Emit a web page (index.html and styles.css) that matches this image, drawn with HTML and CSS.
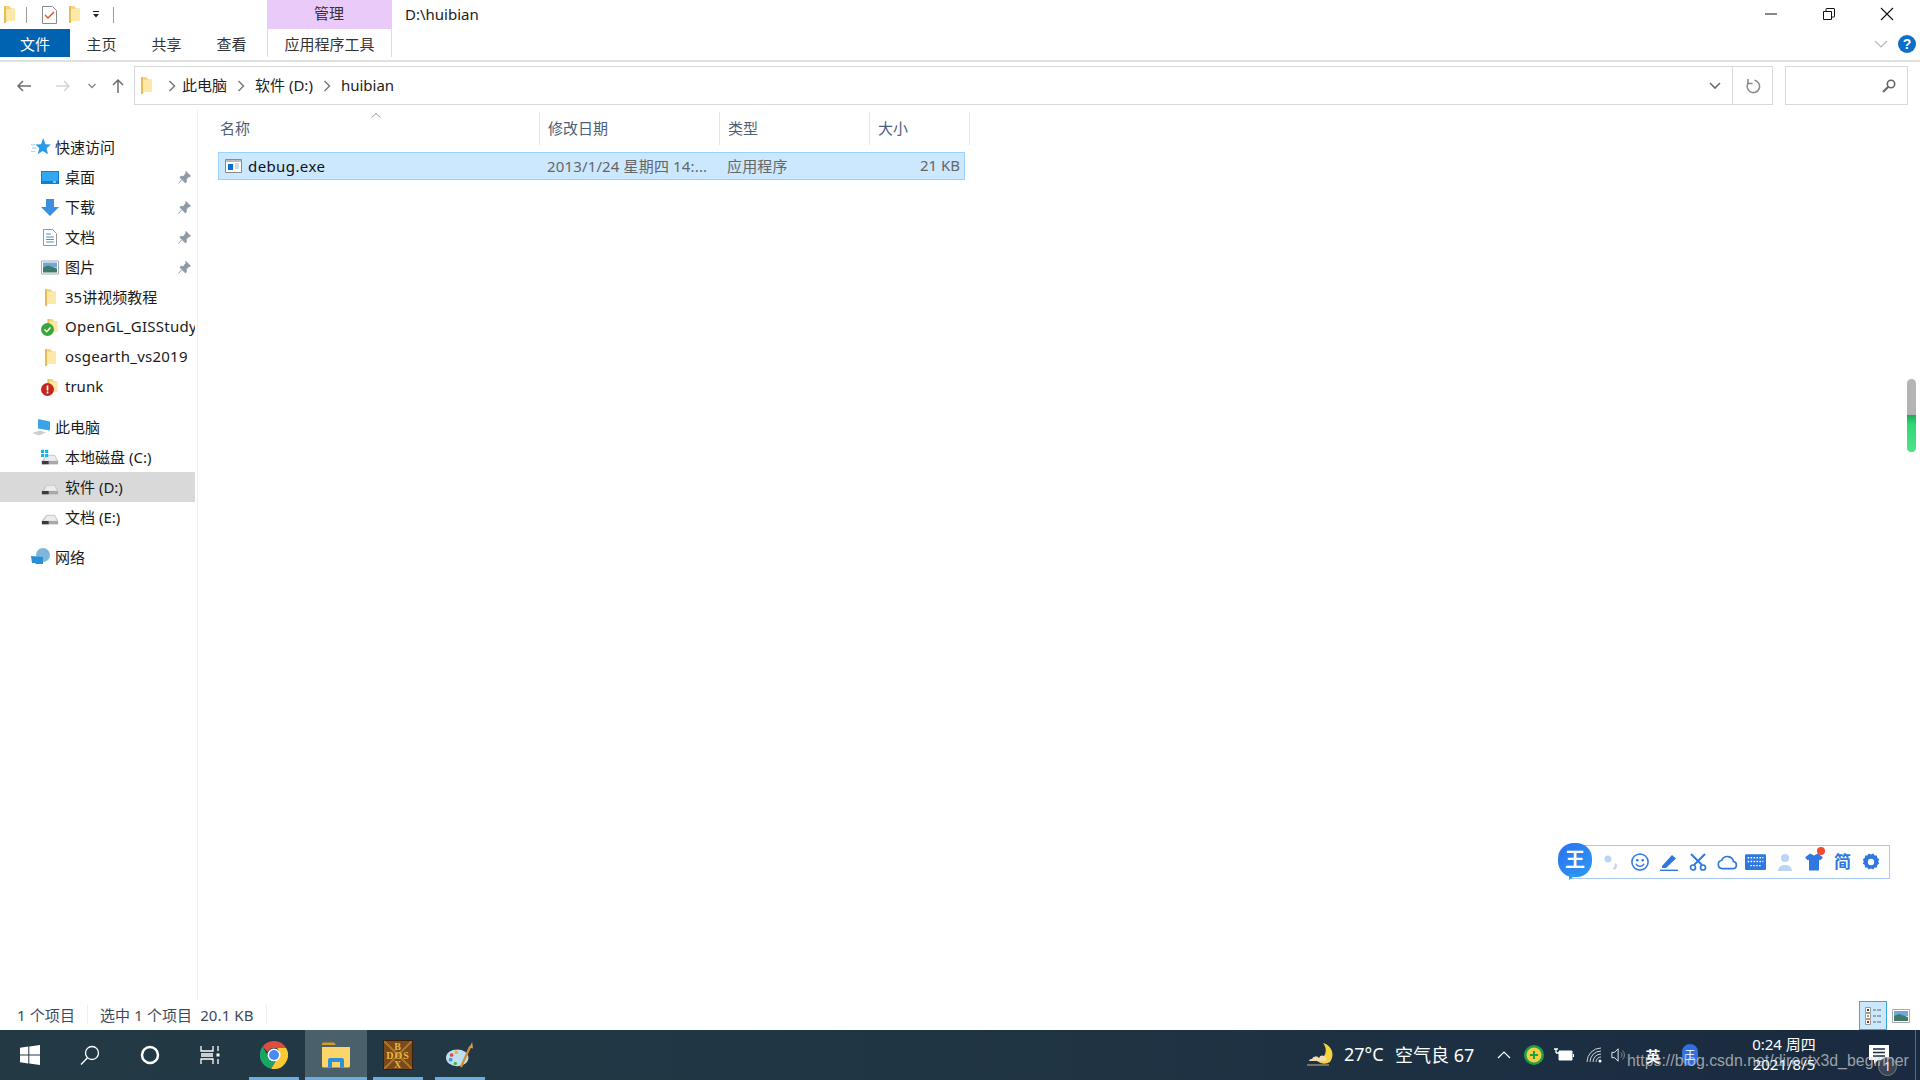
FILE: index.html
```html
<!DOCTYPE html>
<html lang="zh-CN">
<head>
<meta charset="utf-8">
<title>D:\huibian</title>
<link rel="stylesheet" href="styles.css">
</head>
<body>
<svg class="defs" width="0" height="0">
  <symbol id="folder" viewBox="0 0 12 17">
    <path d="M1 0h5.500l2 2.500H12V14.500H5.500L1 17z" fill="#f5d77f"/>
    <path d="M1 0h2v17H1z" fill="#e6bd56"/>
    <path d="M3 3h9v11.500H3z" fill="#fce9a8"/>
  </symbol>
  <symbol id="pin" viewBox="0 0 14 14">
    <path d="M8.500 0.500l5 5-2 .8-2.700 2.700.2 2.800-1 1-6-6 1-1 2.800.2L8.500 2.500z M4 9.500L.5 13.500" fill="#8e99a6" stroke="#8e99a6"/>
  </symbol>
  <symbol id="drive" viewBox="0 0 20 12">
    <path d="M1 7L6 .5h9.500L19 7v4H1z" fill="#c9c9c9"/>
    <path d="M6.500 1.500h8.500L17.500 7h-14z" fill="#ececec"/>
    <path d="M1 7.500h18v3.500H1z" fill="#a8a8a8"/>
    <path d="M1 7.500h7.500v3.500H1z" fill="#3c3c3c"/>
  </symbol>
  <symbol id="sep" viewBox="0 0 8 12">
    <path d="M1.500 1L6.500 6 1.500 11" fill="none" stroke="#7b7b7b" stroke-width="1.500"/>
  </symbol>
</svg>

<header class="titlebar">
  <div class="qat">
    <svg class="ic12" viewBox="0 0 12 17"><use href="#folder"/></svg>
    <span class="qat-sep"></span>
    <svg class="qat-check" viewBox="0 0 15 18"><path d="M.5.500h10l4 4v13H.500z" fill="#fff" stroke="#8a8a8a"/><path d="M3 9l3 3 6-6" fill="none" stroke="#e8542a" stroke-width="1.500"/></svg>
    <svg class="ic12 qat-f2" viewBox="0 0 12 17"><use href="#folder"/></svg>
    <svg class="qat-down" viewBox="0 0 8 7"><path d="M1 .500h6" stroke="#222"/><path d="M1 3h6L4 6.500z" fill="#222"/></svg>
    <span class="qat-sep qat-sep2"></span>
  </div>
  <div class="manage">管理</div>
  <div class="wintitle">D:\huibian</div>
  <div class="winbtns">
    <svg class="winbtn" viewBox="0 0 14 14"><path d="M1 7h12" stroke="#111"/></svg>
    <svg class="winbtn" viewBox="0 0 14 14"><path d="M1.500 4.500h8v8h-8z M4 4.500V2a.5.5 0 0 1 .5-.5h7.500a.5.5 0 0 1 .5.500V9.500a.5.5 0 0 1-.5.500H9.500" fill="none" stroke="#111"/></svg>
    <svg class="winbtn" viewBox="0 0 14 14"><path d="M1 1l12 12M13 1L1 13" stroke="#111" stroke-width="1.100"/></svg>
  </div>
</header>

<nav class="ribbon">
  <div class="rtab rtab-file">文件</div>
  <div class="rtab">主页</div>
  <div class="rtab">共享</div>
  <div class="rtab">查看</div>
  <div class="rtab-tool">应用程序工具</div>
  <div class="ribbon-right">
    <svg class="rib-chev" viewBox="0 0 14 8"><path d="M1 1l6 6 6-6" fill="none" stroke="#b5b5b5" stroke-width="1.200"/></svg>
    <svg class="help" viewBox="0 0 18 18"><circle cx="9" cy="9" r="9" fill="#0a6fc9"/><text x="9" y="14" class="help-q">?</text></svg>
  </div>
</nav>

<section class="addrrow">
  <div class="navbtns">
    <svg class="nav-back" viewBox="0 0 16 12"><path d="M15 6H2M7 1L2 6l5 5" fill="none" stroke="#6d6d6d" stroke-width="1.500"/></svg>
    <svg class="nav-fwd" viewBox="0 0 16 12"><path d="M1 6h13M9 1l5 5-5 5" fill="none" stroke="#d6d6d6" stroke-width="1.500"/></svg>
    <svg class="nav-down" viewBox="0 0 8 6"><path d="M.5 1l3.500 3.500L7.500 1" fill="none" stroke="#888" stroke-width="1.400"/></svg>
    <svg class="nav-up" viewBox="0 0 12 15"><path d="M6 15V2M1 7l5-5 5 5" fill="none" stroke="#6d6d6d" stroke-width="1.500"/></svg>
  </div>
  <div class="addrbox">
    <svg class="addr-folder" viewBox="0 0 12 17"><use href="#folder"/></svg>
    <svg class="crumb-sep crumb-first" viewBox="0 0 8 12"><use href="#sep"/></svg>
    <span class="crumb">此电脑</span>
    <svg class="crumb-sep" viewBox="0 0 8 12"><use href="#sep"/></svg>
    <span class="crumb">软件 (D:)</span>
    <svg class="crumb-sep" viewBox="0 0 8 12"><use href="#sep"/></svg>
    <span class="crumb">huibian</span>
    <svg class="addr-drop" viewBox="0 0 12 8"><path d="M1 1l5 5 5-5" fill="none" stroke="#6d6d6d" stroke-width="1.600"/></svg>
  </div>
  <div class="refresh">
    <svg class="refresh-ic" viewBox="0 0 16 16"><path d="M9.500 2.300A6.200 6.200 0 1 1 3.800 4.200" fill="none" stroke="#8a8a8a" stroke-width="1.500"/><path d="M3 1v4.500h4.500" fill="none" stroke="#8a8a8a" stroke-width="1.500"/></svg>
  </div>
  <div class="searchbox">
    <svg class="search-ic" viewBox="0 0 14 14"><circle cx="9" cy="5" r="3.700" fill="none" stroke="#666" stroke-width="1.600"/><path d="M6.300 7.700L1 13" stroke="#666" stroke-width="2"/></svg>
  </div>
</section>

<main class="content">
  <aside class="side">
    <div class="nav-row nav-top">
      <svg class="ni-top" viewBox="0 0 18 16"><path d="M11 0l2 5.500 5 .2-4 3.400 1.300 5.400L10.500 11.600 6 14.500l1.500-5.400-3.500-3.400 5-.2z" fill="#2a9be8"/><path d="M0 6h4M1 9h4M0 12h4" stroke="#a9d4f2"/></svg>
      <span class="nav-label">快速访问</span>
    </div>
    <div class="nav-row nav-child">
      <svg class="ni" viewBox="0 0 18 13"><path d="M0 0h18v13H0z" fill="#0e7ed8"/><path d="M1 1h16v9H1z" fill="#35a7ef"/><path d="M12 11h3" stroke="#fff"/></svg>
      <span class="nav-label">桌面</span><svg class="pin" viewBox="0 0 14 14"><use href="#pin"/></svg>
    </div>
    <div class="nav-row nav-child">
      <svg class="ni ni-tall" viewBox="0 0 18 17"><path d="M5 0h8v8h5l-9 9-9-9h5z" fill="#3b8fe0"/></svg>
      <span class="nav-label">下载</span><svg class="pin" viewBox="0 0 14 14"><use href="#pin"/></svg>
    </div>
    <div class="nav-row nav-child">
      <svg class="ni ni-tall" viewBox="0 0 14 17"><path d="M.5.500h9l4 4v12H.500z" fill="#fff" stroke="#999"/><path d="M3 5h5M3 8h8M3 10.500h8M3 13h8" stroke="#4d92c9"/></svg>
      <span class="nav-label">文档</span><svg class="pin" viewBox="0 0 14 14"><use href="#pin"/></svg>
    </div>
    <div class="nav-row nav-child">
      <svg class="ni" viewBox="0 0 18 14"><path d="M.5.500h17v13H.500z" fill="#fff" stroke="#aaa"/><path d="M2 2h14v5H2z" fill="#6fa8d8"/><path d="M2 7l5-2 9 3v4H2z" fill="#3f7a6e"/></svg>
      <span class="nav-label">图片</span><svg class="pin" viewBox="0 0 14 14"><use href="#pin"/></svg>
    </div>
    <div class="nav-row nav-child">
      <svg class="ni ni-tall" viewBox="0 0 12 17"><use href="#folder"/></svg>
      <span class="nav-label">35讲视频教程</span>
    </div>
    <div class="nav-row nav-child">
      <svg class="ni ni-tall" viewBox="0 0 18 17"><g transform="translate(5 0)"><use href="#folder" width="12" height="15"/></g><circle cx="6.500" cy="10.500" r="6.500" fill="#3aa63a"/><path d="M3.500 10.500l2.200 2.200L9.500 8.500" fill="none" stroke="#fff" stroke-width="1.500"/></svg>
      <span class="nav-label lat">OpenGL_GISStudy</span>
    </div>
    <div class="nav-row nav-child">
      <svg class="ni ni-tall" viewBox="0 0 12 17"><use href="#folder"/></svg>
      <span class="nav-label lat">osgearth_vs2019</span>
    </div>
    <div class="nav-row nav-child">
      <svg class="ni ni-tall" viewBox="0 0 18 17"><g transform="translate(5 0)"><use href="#folder" width="12" height="15"/></g><circle cx="6.500" cy="10.500" r="6.500" fill="#c0271d"/><path d="M6.500 6.500v5M6.500 12.500v2" stroke="#fff" stroke-width="1.700"/></svg>
      <span class="nav-label">trunk</span>
    </div>

    <div class="nav-row nav-top nav-group">
      <svg class="ni-top" viewBox="0 0 20 18"><path d="M7 1l12 2.500v9L7 10.500z" fill="#3ba4e8"/><path d="M1 15l8-2.500 6 2-7 3z" fill="#cfcfcf"/></svg>
      <span class="nav-label">此电脑</span>
    </div>
    <div class="nav-row nav-child">
      <svg class="ni ni-tall" viewBox="0 0 20 17"><use href="#drive" y="5" width="20" height="12"/><path d="M0 0h3.500v3.500H0zM4.500 0H8v3.500H4.500zM0 4.500h3.500V8H0zM4.500 4.500H8V8H4.500z" fill="#12b5ee"/></svg>
      <span class="nav-label">本地磁盘 (C:)</span>
    </div>
    <div class="nav-row nav-child nav-selected">
      <svg class="ni ni-tall" viewBox="0 0 20 17"><use href="#drive" y="5" width="20" height="12"/></svg>
      <span class="nav-label">软件 (D:)</span>
    </div>
    <div class="nav-row nav-child">
      <svg class="ni ni-tall" viewBox="0 0 20 17"><use href="#drive" y="5" width="20" height="12"/></svg>
      <span class="nav-label">文档 (E:)</span>
    </div>

    <div class="nav-row nav-top nav-group">
      <svg class="ni-top" viewBox="0 0 20 18"><circle cx="12" cy="7" r="7" fill="#7fb7dc"/><path d="M0 8l12 1v7H5l-1-1H1z" fill="#2a8fd4"/></svg>
      <span class="nav-label">网络</span>
    </div>
  </aside>

  <section class="files">
    <div class="fhead">
      <div class="fh">名称</div>
      <div class="fh">修改日期</div>
      <div class="fh">类型</div>
      <div class="fh">大小</div>
      <svg class="sort" viewBox="0 0 10 5"><path d="M.5 4.500L5 .5l4.500 4" fill="none" stroke="#9a9a9a"/></svg>
    </div>
    <div class="frow">
      <div class="fname">
        <svg class="exe" viewBox="0 0 17 14"><path d="M.5.500h16v13H.500z" fill="#fff" stroke="#8a8a8a"/><path d="M1 1h15v2H1z" fill="#bcbcbc"/><path d="M3 5h5v6H3z" fill="#0a6fd0"/><path d="M10 5h4M10 7h4M10 9h4" stroke="#9cb4cc"/></svg>
        <span class="fname-text">debug.exe</span>
      </div>
      <div class="fcell">2013/1/24 星期四 14:...</div>
      <div class="fcell">应用程序</div>
      <div class="fcell fsize">21 KB</div>
    </div>
  </section>
</main>

<footer class="status">
  <span class="st st-a">1 个项目</span>
  <span class="st st-b">选中 1 个项目&nbsp;&nbsp;20.1 KB</span>
  <div class="views">
    <div class="view view-on">
      <svg class="view-ic" viewBox="0 0 18 20"><path d="M1.500 1.500h5v5h-5zM1.500 7.500h5v5h-5zM1.500 13.500h5v5h-5z" fill="#fff" stroke="#999"/><path d="M3 3h2v2H3z" fill="#444"/><path d="M3 9h2v2H3z" fill="#d08a2a"/><path d="M3 15h2v2H3z" fill="#c02020"/><path d="M9 4h3M13 4h4M9 10h3M13 10h4M9 16h3M13 16h4" stroke="#666"/></svg>
    </div>
    <svg class="view-large" viewBox="0 0 18 14"><path d="M.5.500h17v13H.500z" fill="#fff" stroke="#aaa"/><path d="M2 2h14v5H2z" fill="#6fa8d8"/><path d="M2 7l5-2 9 3v4H2z" fill="#3f7a6e"/></svg>
  </div>
</footer>

<div class="taskbar">
  <div class="tb-sys">
    <svg class="tb-start" viewBox="0 0 20 20"><path d="M0 2.800l8.300-1.200v8H0zM9.300 1.400L20 0v9.600H9.300zM0 10.500h8.300v8L0 17.200zM9.300 10.500H20V20L9.300 18.500z" fill="#fff"/></svg>
    <svg class="tb-start" viewBox="0 0 20 20"><circle cx="12" cy="8" r="6.500" fill="none" stroke="#fff" stroke-width="1.300"/><path d="M7.500 12.700L1 19.500" stroke="#fff" stroke-width="1.300"/></svg>
    <svg class="tb-start" viewBox="0 0 20 20"><circle cx="10" cy="10" r="8" fill="none" stroke="#fff" stroke-width="2.500"/></svg>
    <svg class="tb-start" viewBox="0 0 20 20"><path d="M1 1v5h12V1M1 19v-5h12v5M1 9h12M1 11h12" fill="none" stroke="#fff" stroke-width="1.300"/><path d="M18 1v5M18 14v5" stroke="#fff" stroke-width="1.300"/><path d="M16.500 8.500h3v3h-3z" fill="#fff"/></svg>
  </div>
  <div class="tb-apps">
    <div class="tb-app">
      <svg class="tb-appic" viewBox="0 0 28 28"><path d="M14 0a14 14 0 0 1 12.100 7H14a7 7 0 0 0-6.400 4L2.600 5.500A14 14 0 0 1 14 0z" fill="#dc4e41"/><path d="M2.600 5.500L8.600 16a7 7 0 0 0 6.300 5L11.200 27.700A14 14 0 0 1 2.600 5.500z" fill="#1da462"/><path d="M26.100 7A14 14 0 0 1 11.200 27.700L17.500 17a7 7 0 0 0-.5-9.900z" fill="#fcc934"/><circle cx="14" cy="14" r="6.500" fill="#fff"/><circle cx="14" cy="14" r="5" fill="#4a8af4"/></svg>
    </div>
    <div class="tb-app tb-active">
      <svg class="tb-appic" viewBox="0 0 28 26"><path d="M0 2a1.500 1.500 0 0 1 1.500-1.500H12l2 2.500H0z" fill="#d99a1f"/><path d="M0 5h28v19a1.500 1.500 0 0 1-1.500 1.500h-25A1.500 1.500 0 0 1 0 24z" fill="#fcd56a"/><path d="M6 25.500V18a2 2 0 0 1 2-2h12a2 2 0 0 1 2 2v7.500h-4V20h-8v5.500z" fill="#2f8fd8"/></svg>
    </div>
    <div class="tb-app">
      <div class="dosbox"><span>B</span><span>DOS</span><span>X</span></div>
    </div>
    <div class="tb-app">
      <svg class="tb-appic" viewBox="0 0 30 30"><ellipse cx="12" cy="18" rx="12" ry="9" fill="#bcdff2"/><circle cx="6" cy="15" r="2" fill="#e04a3a"/><circle cx="11" cy="12" r="2" fill="#e8b53a"/><circle cx="5" cy="20" r="2" fill="#3a9ad9"/><circle cx="10" cy="24" r="1.800" fill="#4cae4c"/><path d="M16 28L26 6" stroke="#d98a2a" stroke-width="2.500"/><path d="M25 7l3-6 1 7z" fill="#c8a060"/></svg>
    </div>
  </div>
  <div class="tb-spacer"></div>
  <div class="tray">
    <svg class="t-moon" viewBox="0 0 27 26"><path d="M17 1a11 11 0 0 1-6 18 12 12 0 0 0 13 1A12 12 0 0 0 17 1z" fill="#f6d23f"/><path d="M6 17a4 4 0 0 1 7-1 3 3 0 0 1 7 3H3a2.500 2.500 0 0 1 3-2z" fill="#f0dcb0"/><path d="M1 23h22" stroke="#c9b488"/></svg>
    <span class="t-temp">27°C</span>
    <span class="t-aqi">空气良 67</span>
    <div class="t-cell t-first"><svg class="t-ic" viewBox="0 0 16 16"><path d="M2 11l6-6 6 6" fill="none" stroke="#fff" stroke-width="1.200"/></svg></div>
    <div class="t-cell"><svg class="t-ic t-big" viewBox="0 0 20 20"><circle cx="10" cy="10" r="10" fill="#1e9e4a"/><circle cx="10" cy="10" r="7.500" fill="#f0d040"/><path d="M10 6v8M6 10h8" stroke="#1e9e4a" stroke-width="2"/></svg></div>
    <div class="t-cell"><svg class="t-ic t-big" viewBox="0 0 20 14"><path d="M5 3h13v9H5z" fill="#fff" stroke="#fff"/><path d="M19 6h1v3h-1z" fill="#fff"/><path d="M0 1h4M2 1v4M2 5h3" stroke="#fff" stroke-width="1.300" fill="none"/></svg></div>
    <div class="t-cell"><svg class="t-ic" viewBox="0 0 16 16"><path d="M1 15A14 14 0 0 1 15 1M4 15A11 11 0 0 1 15 4M7 15a8 8 0 0 1 8-8M10 15a5 5 0 0 1 5-5" fill="none" stroke="#cfd4da" stroke-width="1"/><circle cx="14" cy="14" r="1.500" fill="#fff"/></svg></div>
    <div class="t-cell t-narrow"><svg class="t-ic" viewBox="0 0 18 16"><path d="M1 5h3l4-4v14l-4-4H1z" fill="none" stroke="#fff"/><path d="M11 5a4 4 0 0 1 0 6M13 3a7 7 0 0 1 0 10" fill="none" stroke="#8a94a0"/></svg></div>
    <div class="t-cell t-en"><span class="t-lang">英</span></div>
    <div class="t-cell t-ime"><span class="t-wang">王</span></div>
    <div class="clock"><span>0:24 周四</span><span>2021/8/5</span></div>
    <div class="notif">
      <svg class="notif-ic" viewBox="0 0 20 20"><path d="M0 0h20v15H9l-4 4v-4H0z" fill="#fff"/><path d="M4 4h12M4 7.500h12M4 11h12" stroke="#1b2b40" stroke-width="1.300"/></svg>
      <span class="notif-count">1</span>
    </div>
  </div>
</div>

<div class="ime">
  <div class="ime-bar">
    <span class="ime-slot"><svg class="ime-ic" viewBox="0 0 18 18"><circle cx="6" cy="6" r="3.500" fill="#bdd4f5"/><path d="M13 11c1.500 1 1 4-1.500 5" fill="none" stroke="#bdd4f5" stroke-width="2.200"/></svg></span>
    <span class="ime-slot"><svg class="ime-ic" viewBox="0 0 20 20"><circle cx="10" cy="10" r="9" fill="none" stroke="#2f78e0" stroke-width="1.700"/><circle cx="7" cy="8" r="1.400" fill="#2f78e0"/><circle cx="13" cy="8" r="1.400" fill="#2f78e0"/><path d="M5.500 12a5 5 0 0 0 9 0" fill="none" stroke="#2f78e0" stroke-width="1.500"/></svg></span>
    <span class="ime-slot"><svg class="ime-ic" viewBox="0 0 18 18"><path d="M2 13L12 2l4 3.500L6 15H2z" fill="#2f78e0"/><path d="M0 17.300h18" stroke="#2f78e0" stroke-width="1.400"/></svg></span>
    <span class="ime-slot"><svg class="ime-ic" viewBox="0 0 18 18"><path d="M2 1l11 11M16 1L5 12" stroke="#2f78e0" stroke-width="2"/><circle cx="4" cy="14.500" r="2.500" fill="none" stroke="#2f78e0" stroke-width="1.700"/><circle cx="14" cy="14.500" r="2.500" fill="none" stroke="#2f78e0" stroke-width="1.700"/></svg></span>
    <span class="ime-slot"><svg class="ime-ic ime-wide" viewBox="0 0 22 16"><path d="M5.500 15a4.500 4.500 0 0 1-.5-8.900 6.500 6.500 0 0 1 12.300 1.400A3.800 3.800 0 0 1 17 15z" fill="none" stroke="#2f78e0" stroke-width="1.700"/></svg></span>
    <span class="ime-slot"><svg class="ime-ic ime-wide" viewBox="0 0 20 15"><path d="M1 0h18a1 1 0 0 1 1 1v13a1 1 0 0 1-1 1H1a1 1 0 0 1-1-1V1a1 1 0 0 1 1-1z" fill="#2f78e0"/><path d="M2.500 3.500h15M2.500 7h15M5 11h10" stroke="#fff" stroke-width="1.300" stroke-dasharray="1.500 1.300"/></svg></span>
    <span class="ime-slot"><svg class="ime-ic" viewBox="0 0 18 18"><circle cx="9" cy="5" r="4" fill="#bdd4f5"/><path d="M2 18c0-8 14-8 14 0z" fill="#bdd4f5"/></svg></span>
    <span class="ime-slot"><svg class="ime-ic" viewBox="0 0 18 17"><path d="M5 0l4 2 4-2 5 4-3 3-1-1v11H4V6L3 7 0 4z" fill="#2f78e0"/></svg><i class="ime-dot"></i></span>
    <span class="ime-slot"><span class="ime-jian">简</span></span>
    <span class="ime-slot"><svg class="ime-ic" viewBox="0 0 18 18"><path d="M9 1.500l2.300-1 1.300 2 2.400.1.200 2.400 2 1.300-1 2.200 1 2.200-2 1.300-.2 2.400-2.400.1-1.300 2-2.300-1-2.300 1-1.300-2-2.400-.1-.2-2.400-2-1.300 1-2.200-1-2.200 2-1.300.2-2.400 2.400-.1 1.300-2z" fill="#2f78e0"/><circle cx="9" cy="9" r="3.200" fill="#fff"/></svg></span>
  </div>
  <div class="ime-logo">王<i class="ime-tail"></i></div>
</div>

<div class="scrollwidget"><div class="sw-green"></div></div>
<div class="watermark">https://blog.csdn.net/directx3d_beginner</div>
</body>
</html>
```
FILE: styles.css
```css
* { box-sizing: border-box; }
html, body { margin: 0; height: 100%; }
body {
  width: 1920px;
  height: 1080px;
  overflow: hidden;
  position: relative;
  display: flex;
  flex-direction: column;
  background: #fff;
  color: #1a1a1a;
  font: 15px "Noto Sans", "Noto Sans CJK SC", sans-serif;
}
svg { display: block; flex: none; }
.defs { position: absolute; }

/* title bar */
.titlebar { height: 29px; display: flex; align-items: stretch; flex: none; }
.qat { width: 267px; display: flex; align-items: center; padding-left: 3px; }
.ic12 { width: 12px; height: 17px; }
.qat-sep { width: 1px; height: 16px; background: #9a9a9a; margin-left: 11px; }
.qat-sep2 { margin-left: 13px; }
.qat-check { width: 15px; height: 18px; margin-left: 15px; }
.qat-f2 { margin-left: 11px; }
.qat-down { width: 8px; height: 7px; margin-left: 12px; }
.manage { width: 125px; background: #e9caf9; text-align: center; line-height: 27px; color: #333; padding-right: 1px; }
.wintitle { margin-left: 13px; line-height: 28px; color: #222; }
.winbtns { margin-left: auto; display: flex; align-items: center; gap: 44px; padding-right: 26px; padding-bottom: 2px; }
.winbtn { width: 14px; height: 14px; }

/* ribbon */
.ribbon { height: 33px; flex: none; display: flex; align-items: flex-start; border-bottom: 2px solid #e0e0e0; }
.rtab { width: 65px; height: 28px; line-height: 30px; text-align: center; color: #333; }
.rtab-file { width: 70px; background: #0063b1; color: #fff; margin-right: -1px; }
.rtab-tool { width: 125px; margin-left: 3px; line-height: 30px; height: 28px; text-align: center; color: #333; border-left: 1px solid #ddd; border-right: 1px solid #ddd; }
.ribbon-right { margin-left: auto; display: flex; align-items: center; height: 28px; gap: 10px; padding-right: 4px; padding-top: 2px; }
.rib-chev { width: 14px; height: 8px; }
.help { width: 18px; height: 18px; }
.help-q { font: bold 14px "Liberation Sans", sans-serif; fill: #fff; text-anchor: middle; }

/* address row */
.addrrow { height: 48px; flex: none; display: flex; align-items: flex-start; padding: 4px 12px 0 0; }
.navbtns { width: 134px; height: 39px; display: flex; align-items: center; padding-left: 16px; flex: none; }
.nav-back, .nav-fwd { width: 16px; height: 12px; }
.nav-fwd { margin-left: 23px; }
.nav-down { width: 8px; height: 6px; margin-left: 17px; }
.nav-up { width: 12px; height: 15px; margin-left: 16px; }
.addrbox { flex: 1; height: 39px; border: 1px solid #d9d9d9; display: flex; align-items: center; padding-left: 5px; color: #222; }
.addr-folder { width: 12px; height: 17px; }
.crumb-sep { width: 8px; height: 12px; margin: 0 10px; }
.crumb-first { margin-left: 16px; margin-right: 6px; }
.crumb { line-height: 20px; padding-bottom: 2px; }
.addr-drop { width: 12px; height: 8px; margin-left: auto; margin-right: 11px; }
.refresh { width: 40px; height: 39px; border: 1px solid #d9d9d9; border-left: 0; display: flex; align-items: center; justify-content: center; }
.refresh-ic { width: 16px; height: 16px; }
.searchbox { width: 123px; height: 39px; margin-left: 12px; border: 1px solid #d9d9d9; display: flex; align-items: center; justify-content: flex-end; padding-right: 11px; }
.search-ic { width: 14px; height: 14px; }

/* content */
.content { flex: 1; display: flex; min-height: 0; }
.side { width: 198px; flex: none; padding: 22px 2px 0 0; border-right: 1px solid #f0f0f0; }
.nav-row { height: 30px; display: flex; align-items: center; white-space: nowrap; overflow: hidden; color: #1a1a1a; }
.nav-top { padding-left: 31px; }
.nav-top .nav-label { margin-left: 4px; }
.nav-group { margin-top: 10px; }
.nav-child { padding-left: 41px; }
.ni-top { width: 20px; height: 18px; }
.ni { width: 18px; height: 15px; }
.ni-tall { height: 17px; }
.nav-label { margin-left: 6px; padding-bottom: 2px; }
.lat { letter-spacing: .25px; }
.pin { width: 13px; height: 13px; margin-left: auto; margin-right: 4px; }
.nav-selected { background: #d9d9d9; }

.files { flex: 1; padding: 2px 0 0 20px; }
.fhead { display: grid; grid-template-columns: 322px 180px 150px 100px; width: 752px; height: 31px; position: relative; color: #4c607a; }
.fh { line-height: 33px; padding-left: 8px; border-right: 1px solid #e5e5e5; }
.fh:first-child { padding-left: 2px; }
.sort { width: 10px; height: 5px; position: absolute; left: 153px; top: 1px; }
.frow { display: grid; grid-template-columns: 321px 180px 151px 93px; width: 747px; height: 28px; margin-top: 9px; background: #cce8ff; border: 1px solid #99d1ff; align-items: center; }
.fname { display: flex; align-items: center; padding-left: 6px; color: #111; }
.fname-text { letter-spacing: .4px; padding-bottom: 1px; }
.exe { width: 17px; height: 14px; margin-right: 6px; }
.fcell { padding: 0 0 2px 7px; color: #666; white-space: nowrap; letter-spacing: .15px; }
.fsize { text-align: right; padding-right: 4px; letter-spacing: 0; }

/* status */
.status { height: 30px; flex: none; display: flex; align-items: center; color: #3c4a5c; padding-left: 17px; }
.st { padding-bottom: 2px; letter-spacing: .1px; position: relative; }
.st::after { content: ""; position: absolute; top: 1px; bottom: 3px; right: 0; width: 1px; background: #eee; }
.st-a { width: 71px; margin-right: 12px; }
.st-b { width: 167px; }
.views { margin-left: auto; display: flex; align-items: center; padding-right: 10px; height: 29px; margin-top: 1px; }
.view { width: 28px; height: 29px; display: flex; align-items: center; justify-content: center; background: #cce8ff; border: 1px solid #3ea8de; }
.view-ic { width: 18px; height: 20px; }
.view-large { width: 18px; height: 14px; margin-left: 5px; }

/* taskbar */
.taskbar { height: 50px; flex: none; display: flex; background: linear-gradient(90deg, #233a45 0%, #203544 50%, #1a2a40 100%); color: #fff; }
.tb-sys { width: 243px; flex: none; display: flex; align-items: center; padding-left: 20px; gap: 40px; padding-right: 3px; }
.tb-start { width: 20px; height: 20px; }
.tb-apps { display: flex; }
.tb-app { width: 62px; display: flex; align-items: center; justify-content: center; position: relative; height: 50px; }
.tb-app::after { content: ""; position: absolute; left: 6px; right: 6px; bottom: 0; height: 3px; background: #6cacdf; }
.tb-active { background: #4a616c; }
.tb-active::after { left: 0; right: 0; }
.tb-appic { width: 28px; height: 28px; }
.dosbox { width: 30px; height: 30px; background: linear-gradient(45deg, transparent 48%, #a8742c 48%, #a8742c 52%, transparent 52%), linear-gradient(-45deg, #7a4a1c 48%, #a8742c 48%, #a8742c 52%, #7a4a1c 52%); border: 1px solid #3a2008; display: flex; flex-direction: column; align-items: center; justify-content: center; font: bold 10px/9px "Liberation Serif", serif; color: #e8b93a; letter-spacing: 1px; }
.tb-spacer { flex: 1; }

.tray { width: 610px; flex: none; display: flex; align-items: center; border-right: 1px solid #5d6a78; margin-right: 4px; }
.t-moon { width: 27px; height: 26px; }
.t-temp { margin-left: 11px; width: 40px; font-size: 18px; white-space: nowrap; padding-bottom: 2px; }
.t-aqi { margin-left: 11px; width: 80px; font-size: 18px; white-space: nowrap; padding-bottom: 2px; }
.t-cell { width: 30px; height: 50px; display: flex; align-items: center; justify-content: center; }
.t-first { margin-left: 14px; }
.t-narrow { width: 20px; }
.t-en { margin-left: 9px; }
.t-ime { margin-left: 7px; }
.t-ic { width: 16px; height: 16px; }
.t-big { width: 20px; height: 20px; }
.t-lang { font-size: 15px; font-weight: 700; }
.t-wang { width: 16px; height: 22px; border-radius: 8px; background: #2f6fe0; font-size: 11px; line-height: 22px; text-align: center; color: #fff; }
.clock { margin-left: 29px; width: 100px; display: flex; flex-direction: column; align-items: center; font-size: 15px; line-height: 20px; padding-bottom: 2px; }
.notif { margin-left: 30px; width: 30px; height: 50px; position: relative; display: flex; align-items: center; justify-content: center; }
.notif-ic { width: 20px; height: 20px; }
.notif-count { position: absolute; left: 14px; top: 27px; width: 19px; height: 19px; border-radius: 50%; background: #3c4654; border: 1px solid #777; font-size: 12px; line-height: 17px; text-align: center; }

/* floating IME toolbar */
.ime { position: absolute; left: 1558px; top: 843px; width: 332px; height: 36px; }
.ime-bar { position: absolute; left: 12px; top: 2px; right: 0; height: 34px; background: #fff; border: 1px solid #a9c8f5; display: flex; align-items: center; padding-left: 26px; }
.ime-slot { width: 28.900px; height: 32px; display: flex; align-items: center; justify-content: center; flex: none; position: relative; }
.ime-ic { width: 18px; height: 18px; }
.ime-wide { width: 21px; height: 16px; }
.ime-dot { position: absolute; left: 18px; top: 1px; width: 8px; height: 8px; border-radius: 50%; background: #ef4a2f; }
.ime-jian { color: #2f78e0; font-size: 17px; font-weight: 700; line-height: 20px; }
.ime-logo { position: absolute; left: 0; top: 0; width: 34px; height: 34px; border-radius: 46%; background: linear-gradient(135deg, #2f6ff0, #2a9cf0); color: #fff; font-size: 20px; font-weight: 700; line-height: 33px; text-align: center; }
.ime-tail { position: absolute; left: 11px; bottom: -3px; width: 8px; height: 6px; background: #2a9cf0; clip-path: polygon(0 0, 100% 0, 0 100%); }

.scrollwidget { position: absolute; left: 1907px; top: 379px; width: 9px; height: 73px; border-radius: 5px; background: #b4b4b4; overflow: hidden; }
.sw-green { margin-top: 36px; height: 37px; background: linear-gradient(180deg, #1fa85c, #2ed873 25%, #55e08a); }

.watermark { position: absolute; left: 1627px; top: 1052px; font: 15.900px "Liberation Sans", sans-serif; color: rgba(215, 215, 215, 0.7); white-space: nowrap; }
```
